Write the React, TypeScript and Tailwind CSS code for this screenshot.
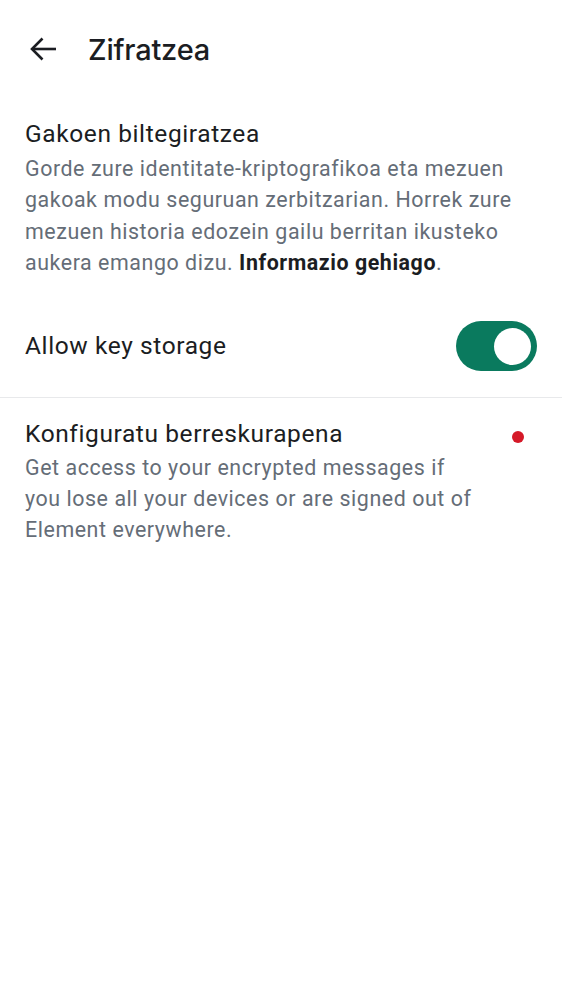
import React from "react";

export default function App() {
  return (
    <div className="w-[562px] h-[1000px] bg-white text-[#1b1d22]" style={{ fontFamily: "Roboto, 'Noto Sans', sans-serif" }}>
      <div className="h-[98px] flex items-center">
        <div className="w-[88px] flex items-center pl-[30px]">
          <svg width="27" height="24" viewBox="0 0 27 24" fill="none" stroke="#1b1d22" strokeWidth="2.6" strokeLinecap="butt" strokeLinejoin="miter">
            <path d="M2 12h24" />
            <path d="M12.5 1.5 2 12l10.5 10.5" />
          </svg>
        </div>
        <h1 className="text-[29px] font-medium leading-none tracking-[-0.2px]" style={{ fontFamily: "Inter, Roboto, sans-serif" }}>Zifratzea</h1>
      </div>

      <div className="px-[25px] pt-[20px]">
        <div className="text-[24.5px] leading-[32px] tracking-[0.6px]">Gakoen biltegiratzea</div>
        <p className="text-[21.4px] leading-[31.4px] tracking-[0.56px] text-[#656d77] mt-[3px]">
          Gorde zure identitate-kriptografikoa eta mezuen gakoak modu seguruan zerbitzarian. Horrek zure mezuen historia edozein gailu berritan ikusteko aukera emango dizu.{" "}
          <span className="font-bold text-[#1b1d22]">Informazio gehiago</span>.
        </p>
      </div>

      <div className="h-[119px] pt-[17px] flex items-center justify-between pl-[25px] pr-[25px] border-b border-[#e8e9eb]">
        <span className="text-[24.5px] tracking-[0.6px]">Allow key storage</span>
        <div className="w-[81px] h-[50px] rounded-full bg-[#0a7a5e] flex items-center justify-end pr-[6px]">
          <div className="w-[37px] h-[37px] rounded-full bg-white" />
        </div>
      </div>

      <div className="flex items-start pl-[25px] pr-[38px] pt-[20px]">
        <div className="flex-1">
          <div className="text-[24.5px] leading-[32px] tracking-[0.6px]">Konfiguratu berreskurapena</div>
          <p className="text-[21.4px] leading-[31.4px] tracking-[0.56px] text-[#656d77] mt-[2px] max-w-[454px]">
            Get access to your encrypted messages if you lose all your devices or are signed out of Element everywhere.
          </p>
        </div>
        <div className="w-[12px] h-[12px] rounded-full bg-[#d51928] mt-[13px]" />
      </div>
    </div>
  );
}
